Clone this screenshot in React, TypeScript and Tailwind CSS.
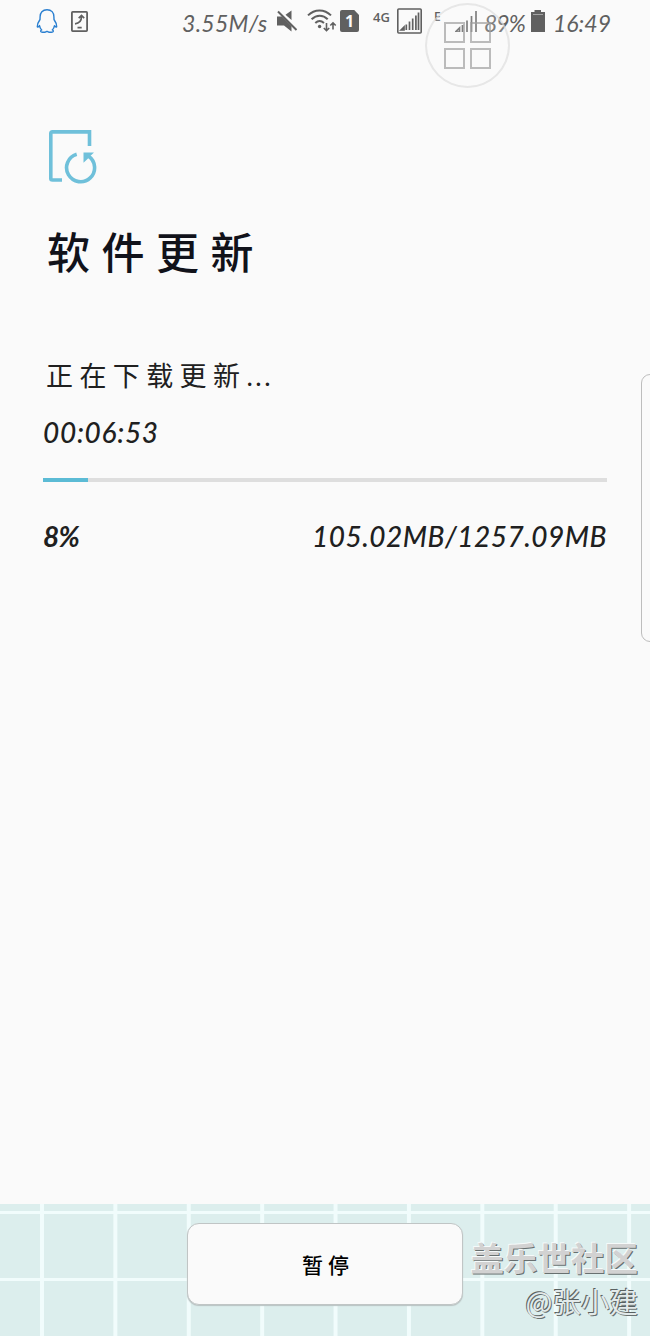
import React from 'react';

const hand = "font-['Lato','Noto_Sans_CJK_SC',sans-serif]";

const progress = { percent: 8, elapsed: '00:06:53', done: '105.02MB', total: '1257.09MB' };

function StatusBar() {
  return (
    <div className={`flex h-[44px] items-start text-[#606060] ${hand}`}>
      <svg className="ml-[36px] mt-[8px] h-[26px] w-[22px] shrink-0" viewBox="0 0 22 26" fill="none" stroke="#2a7fd0" strokeWidth="1.4" strokeLinejoin="round">
        <path d="M11 1.7C6.500 1.700 4.100 4.800 4.100 8.800L4 11.500C2.400 13.800 1.200 16.200 1.300 18.600C1.500 19.700 2.800 18.400 3.500 17.600C3.700 19.300 4.500 20.700 5.700 21.900C4.100 22.600 4.300 24.200 6.500 24.200H9.200L11 23.300L12.800 24.200H15.500C17.700 24.200 17.900 22.600 16.300 21.900C17.500 20.700 18.300 19.300 18.500 17.600C19.200 18.400 20.500 19.700 20.700 18.600C20.800 16.200 19.600 13.800 18 11.500L17.900 8.800C17.900 4.800 15.500 1.700 11 1.700Z" />
      </svg>
      <svg className="ml-[13px] mt-[11px] h-[21px] w-[17px] shrink-0" viewBox="0 0 17 21" fill="none" stroke="#606060">
        <rect x=".9" y=".9" width="15.200" height="19.200" rx=".8" strokeWidth="1.800" />
        <path d="M4 12.800C8 12.500 10.500 11 10.500 5.300M7.700 7.200L10.500 4.500L13.200 7.200M6.500 16.700H10.700" strokeWidth="1.700" />
      </svg>
      <span className="ml-[94px] mt-[8px] w-[87px] shrink-0 whitespace-nowrap text-[23px] italic leading-[30px] tracking-[0.3px]">3.55M/s</span>
      <svg className="ml-[7px] mt-[9px] h-[24px] w-[22px] shrink-0" viewBox="0 0 22 24" fill="#606060">
        <path d="M1 7.500H6L15.500 17V22.500L8 16.500H1ZM15.500 1.500V11L9.500 5.800Z" />
        <path d="M2 2.500L20.500 21" stroke="#606060" strokeWidth="2" />
      </svg>
      <svg className="ml-[9px] mt-[9px] h-[24px] w-[30px] shrink-0" viewBox="0 0 30 24" fill="none" stroke="#606060">
        <path d="M1 6.400C7.500-.300 17.500-.300 24 6.400M4.600 10.300C9.500 5.500 16 5.500 20.700 10.300M8.300 14C11.200 11.300 14 11.300 17 14" strokeWidth="2" />
        <circle cx="12.600" cy="17.500" r="1.700" fill="#606060" stroke="none" />
        <path d="M19.500 14V21.500M16.800 19L19.500 21.700L22.200 19M26 20.500V14M23.300 16.500L26 13.800L28.700 16.500" strokeWidth="1.600" />
      </svg>
      <div className="ml-[3px] mt-[10px] flex h-[22px] w-[19px] shrink-0 items-center justify-center rounded-[2px] bg-[#606060] font-['Open_Sans',sans-serif] text-[16px] font-bold text-[#fafafa] [clip-path:polygon(0_0,75%_0,100%_23%,100%_100%,0_100%)]">1</div>
      <span className="ml-[14px] mt-[9px] w-[19px] shrink-0 font-['Open_Sans',sans-serif] text-[13px] font-semibold leading-[16px]">4G</span>
      <svg className="ml-[5px] mt-[8px] h-[26px] w-[25px] shrink-0" viewBox="0 0 25 26" fill="none" stroke="#606060">
        <rect x=".8" y="1" width="23.400" height="24" rx="1" strokeWidth="1.600" />
        <path d="M4 22L7 19V22ZM9.300 22V16.500M12.500 22V13.500M15.700 22V10.500M18.900 22V7.500M21.500 22V4.500" strokeWidth="1.700" />
      </svg>
      <span className="ml-[12px] mt-[9px] w-[8px] shrink-0 font-['Open_Sans',sans-serif] text-[12px] font-semibold leading-[15px]">E</span>
      <svg className="ml-[13px] mt-[11px] h-[21px] w-[23px] shrink-0" viewBox="0 0 23 21" fill="none" stroke="#606060" strokeWidth="1.700">
        <path d="M.500 21L4.500 17V21ZM7.500 21V14M12 21V9.500M16.500 21V5M21 21V0" />
      </svg>
      <span className="ml-[6px] mt-[8px] w-[42px] shrink-0 whitespace-nowrap text-[23px] italic leading-[30px] tracking-[-1px]">89%</span>
      <svg className="ml-[4px] mt-[10px] h-[22px] w-[16px] shrink-0" viewBox="0 0 16 22">
        <path d="M4.500 0H11V2H15V22H1V2H4.500Z" fill="#606060" />
        <path d="M3 4.500H13" stroke="#a5a5a5" strokeWidth="1" />
      </svg>
      <span className="ml-[7px] mt-[8px] whitespace-nowrap text-[23px] italic leading-[31px]">16:49</span>
    </div>
  );
}

// floating shortcut that sits on top of the status bar
function FloatingButton() {
  return (
    <div className="absolute left-[425px] top-[3px] grid h-[85px] w-[85px] grid-cols-[21px_21px] content-start gap-[5px] rounded-full border-2 border-[#d8d8d8]/60 bg-[#fafafa]/20 pl-[17px] pt-[17px]">
      {[0, 1, 2, 3].map((i) => (
        <div key={i} className="h-[21px] w-[21px] border-2 border-[#a0a0a0]/70" />
      ))}
    </div>
  );
}

function UpdateIcon() {
  return (
    <svg className="ml-[49px] h-[54px] w-[48px]" viewBox="0 0 48 54" fill="none" stroke="#6fc0da" strokeWidth="3.600">
      <path d="M40.500 16V1.900H3.500Q1.800 1.900 1.800 3.600V48.500Q1.800 50 3.500 50H13" />
      <path d="M27.700 24.300A14 14 0 1 0 39.200 26" />
      <path d="M45 22.500H34.500V32.800L38 29.500L41.300 26Z" fill="#6fc0da" stroke="none" />
    </svg>
  );
}

function Footer() {
  return (
    <footer className="flex h-[132px] bg-[#dceeed] bg-[linear-gradient(90deg,#f1fcfc_4px,transparent_4px),linear-gradient(#f1fcfc_3px,transparent_3px)] bg-[size:73.4px_100%,100%_67px] bg-[position:40px_0,0_7px] pt-[19px]">
      <button className={`ml-[187px] flex h-[82px] w-[276px] shrink-0 items-center justify-center rounded-[12px] border border-[#c0c5c5] bg-[#fafafa] pl-[6px] pt-[2px] text-[21px] font-medium tracking-[5px] text-black shadow-[0_1px_1px_#b9c2c2] ${hand}`}>
        暂停
      </button>
      <div className="ml-[7px] w-[168px] shrink-0 whitespace-nowrap text-right font-['Noto_Sans_CJK_SC',sans-serif]">
        <p className="mt-[12px] text-[33.5px] font-bold leading-[44px] text-[#d2d2d2] [text-shadow:-1px_-1px_0_#f5fafa,1px_1px_0_#687070]">盖乐世社区</p>
        <p className="mt-[2px] text-[28.5px] leading-[40px] text-[#e3eaea] [text-shadow:-1px_-1px_0_#596161,1px_1px_0_#687070]">@张小建</p>
      </div>
    </footer>
  );
}

export default function App() {
  return (
    <div className="relative flex h-[1336px] w-[650px] flex-col overflow-hidden bg-[#fafafa]">
      <StatusBar />
      <FloatingButton />
      <main className={`flex-1 pt-[86px] text-[#202020] ${hand}`}>
        <UpdateIcon />
        <h1 className="ml-[47px] mt-[38px] text-[43px] font-medium leading-[62px] tracking-[11.5px] text-[#11121a]">软件更新</h1>
        <p className="ml-[46px] mt-[72px] text-[27px] leading-[40px] tracking-[6.4px]">
          正在下载更新<span className="tracking-[2.5px]">...</span>
        </p>
        <p className="ml-[43px] mt-[18px] text-[28px] font-medium italic leading-[36px] tracking-[0.7px]">{progress.elapsed}</p>
        <div className="ml-[43px] mt-[28px] h-[4px] w-[564px] bg-[#dedede]">
          <div className="h-full bg-[#5bbbd5]" style={{ width: `${progress.percent}%` }} />
        </div>
        <div className="ml-[43px] mt-[35px] flex w-[564px] justify-between text-[28px] italic leading-[38px]">
          <span className="font-bold tracking-[-0.7px]">{progress.percent}%</span>
          <span className="whitespace-nowrap font-medium tracking-[0.5px]">{progress.done}/{progress.total}</span>
        </div>
      </main>
      {/* edge panel handle */}
      <div className="absolute left-[641px] top-[374px] h-[268px] w-[20px] rounded-l-[9px] border border-[#bdbdbd]" />
      <Footer />
    </div>
  );
}
